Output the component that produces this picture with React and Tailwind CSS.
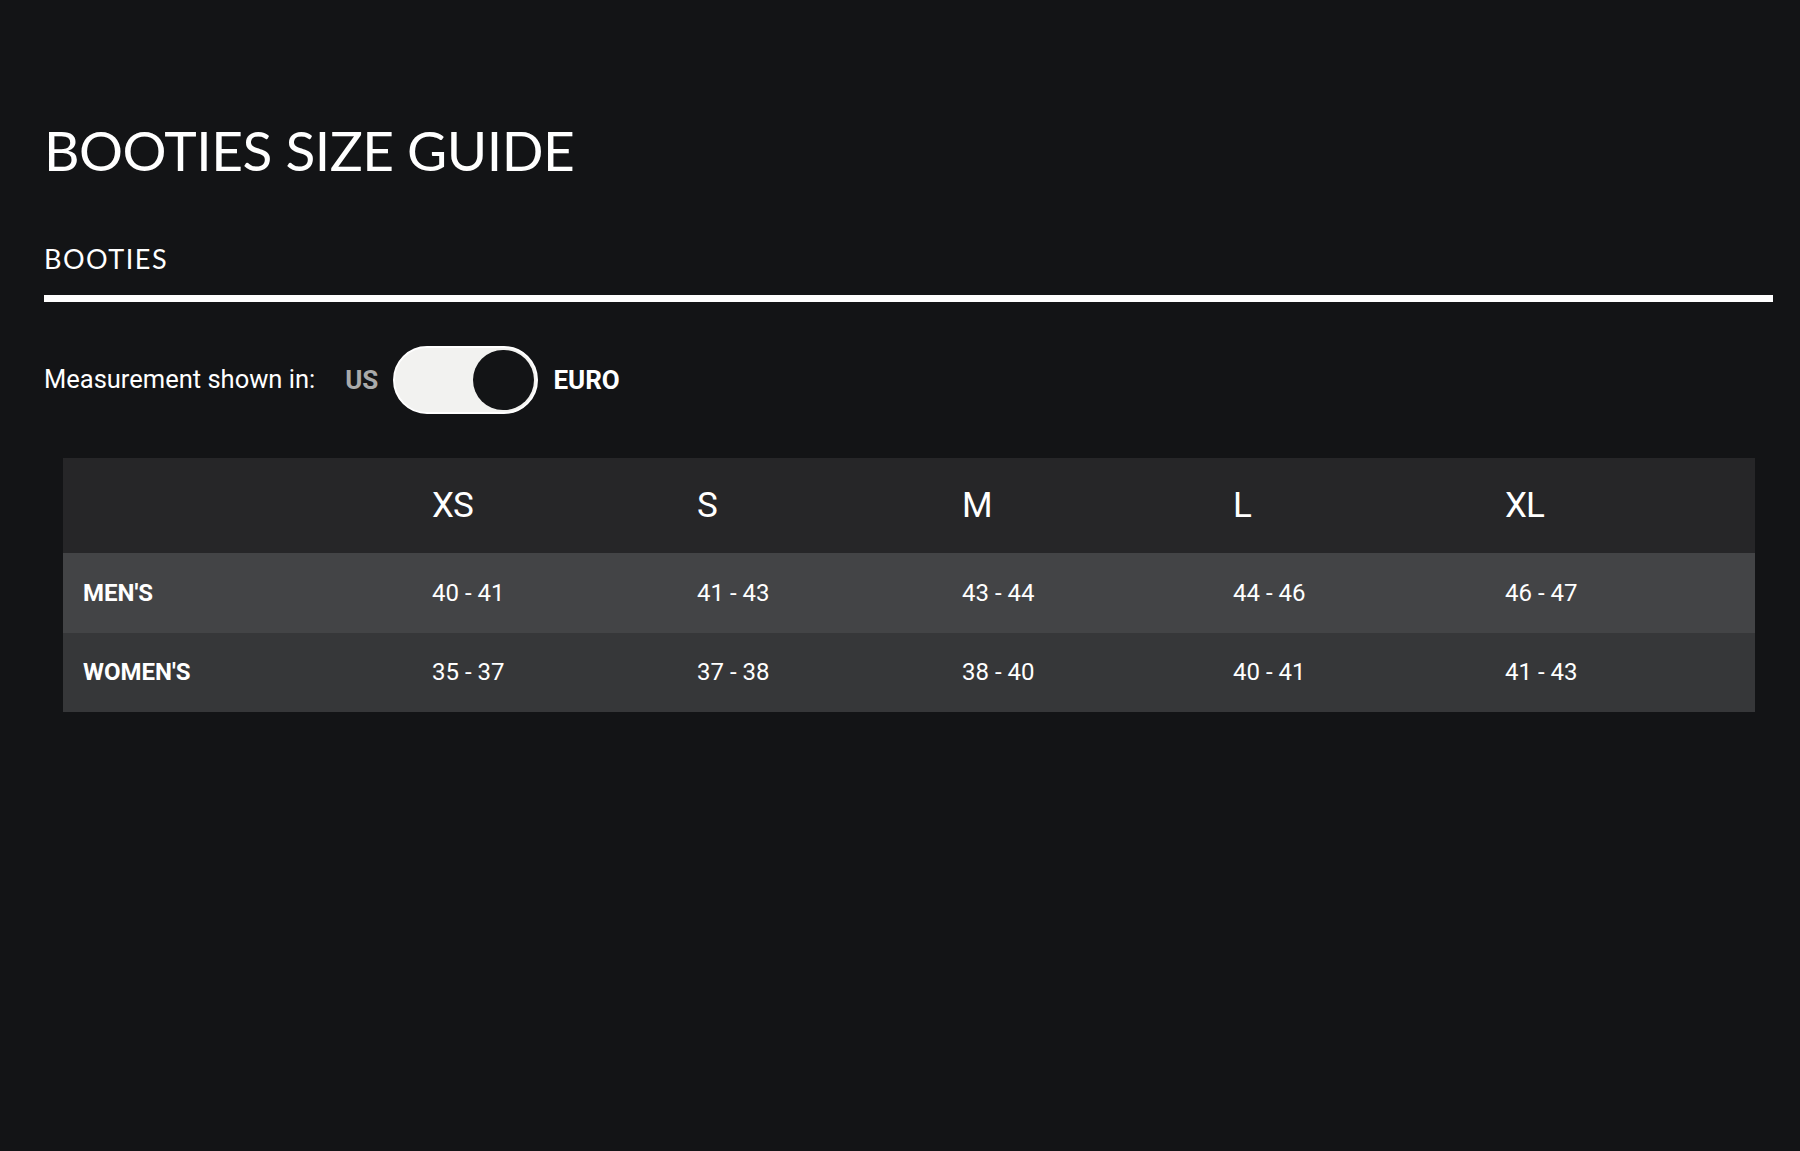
import React from "react";

const sizes = ["XS", "S", "M", "L", "XL"];
const rows = [
  { label: "MEN'S", values: ["40 - 41", "41 - 43", "43 - 44", "44 - 46", "46 - 47"], bg: "bg-[#434446]" },
  { label: "WOMEN'S", values: ["35 - 37", "37 - 38", "38 - 40", "40 - 41", "41 - 43"], bg: "bg-[#363739]" },
];

export default function App() {
  return (
    <div className="min-h-screen bg-[#131416] text-white pl-[44px] pr-[27px] pt-[122px]">
      <h1 className="font-['Lato',sans-serif] text-[55px] leading-[56px] tracking-[-0.5px] font-normal">BOOTIES SIZE GUIDE</h1>

      <div className="mt-[67px] font-['Lato',sans-serif] text-[27px] leading-[27px] tracking-[1.5px]">BOOTIES</div>
      <div className="mt-[23px] h-[7px] bg-white" />

      <div className="mt-[44px] flex items-center font-['Roboto',sans-serif]">
        <span className="text-[25.5px] leading-none">Measurement shown in:</span>
        <span className="ml-[30px] text-[26px] leading-none font-bold text-[#a9aaaa]">US</span>
        <div className="ml-[15px] relative h-[68px] w-[145px] rounded-full bg-[#f2f2f0] border-2 border-white">
          <div className="absolute right-[2px] top-[2px] h-[60px] w-[61px] rounded-full bg-[#131416]" />
        </div>
        <span className="ml-[15px] text-[26px] leading-none font-bold">EURO</span>
      </div>

      <div className="mt-[44px] ml-[19px] mr-[18px] font-['Roboto',sans-serif]">
        <div className="grid grid-cols-[349px_265px_265px_271px_272px_1fr] h-[95px] items-center bg-[#262628]">
          <div />
          {sizes.map((s) => (
            <div key={s} className="pl-[20px] text-[35px] leading-none tracking-[-1px]">{s}</div>
          ))}
        </div>
        {rows.map((r) => (
          <div key={r.label} className={`grid grid-cols-[349px_265px_265px_271px_272px_1fr] h-[79.5px] items-center ${r.bg}`}>
            <div className="pl-[20px] text-[24px] leading-none font-bold">{r.label}</div>
            {r.values.map((v, i) => (
              <div key={i} className="pl-[20px] text-[24px] leading-none">{v}</div>
            ))}
          </div>
        ))}
      </div>
    </div>
  );
}
